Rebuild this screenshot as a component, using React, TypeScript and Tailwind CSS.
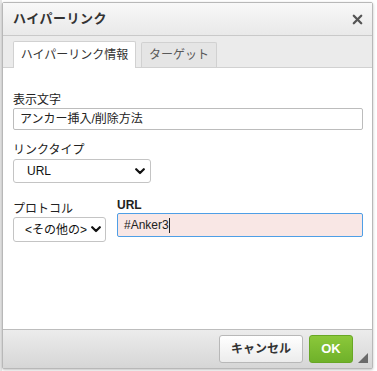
import React from "react";

const jp = { fontFamily: '"Liberation Sans", "Noto Sans CJK JP", sans-serif' };

function Chevron() {
  return (
    <svg width="10" height="7" viewBox="0 0 10 7" className="shrink-0">
      <path d="M1.2 1.2 L5 5 L8.8 1.2" fill="none" stroke="#111" strokeWidth="2.2" strokeLinecap="round" strokeLinejoin="round" />
    </svg>
  );
}

export default function App() {
  return (
    <div className="w-[377px] h-[371px] bg-white relative overflow-hidden" style={jp}>
      <div className="absolute left-0 top-0 w-[2px] h-full bg-[#e6e6e6]" />
      <div className="absolute left-[2px] top-[2px] w-[371px] h-[367px] border border-[#b8b8b8] rounded-[2px] flex flex-col bg-white shadow-[0_1px_3px_rgba(0,0,0,0.25)]">
        {/* title bar */}
        <div className="h-[33px] shrink-0 flex items-center justify-between pl-[10px] pr-[9px] bg-gradient-to-b from-[#f8f8f8] to-[#e9e9e9] border-b border-[#c9c9c9]">
          <span className="text-[13px] font-bold text-[#333] tracking-[0.5px]">ハイパーリンク</span>
          <svg width="11" height="11" viewBox="0 0 11 11">
            <path d="M1.8 1.8 L9.2 9.2 M9.2 1.8 L1.8 9.2" stroke="#555" strokeWidth="2.3" strokeLinecap="round" />
          </svg>
        </div>
        {/* tabs */}
        <div className="h-[32px] shrink-0 bg-[#ebebeb] flex items-end pl-[10px] gap-[5px] border-b border-[#d1d1d1]">
          <div className="h-[27px] w-[123px] flex items-center justify-center bg-white border border-[#d1d1d1] border-b-0 rounded-t-[2px] text-[12px] text-[#333] -mb-px">
            ハイパーリンク情報
          </div>
          <div className="h-[25px] w-[76px] flex items-center justify-center bg-[#e5e5e5] border border-[#d1d1d1] border-b-0 rounded-t-[2px] text-[12px] text-[#595959]">
            ターゲット
          </div>
        </div>
        {/* content */}
        <div className="flex-1 bg-white px-[10px] pt-[24px] flex flex-col">
          <div className="text-[12px] text-[#222] leading-[16px]">表示文字</div>
          <div className="h-[22px] w-[350px] border border-[#bcbcbc] rounded-[2px] flex items-center px-[6px] text-[12px] text-[#222]">
            アンカー挿入/削除方法
          </div>
          <div className="mt-[12px] text-[12px] text-[#222] leading-[16px]">リンクタイプ</div>
          <div className="mt-[1px] h-[24px] w-[138px] border border-[#c4c4c4] rounded-[3px] flex items-center justify-between pl-[13px] pr-[5px] text-[12px] text-[#111]">
            <span>URL</span>
            <Chevron />
          </div>
          <div className="mt-[14px] flex gap-[11px]">
            <div className="flex flex-col pt-[4px]">
              <div className="text-[12px] text-[#222] leading-[16px]">プロトコル</div>
              <div className="h-[25px] w-[93px] border border-[#c4c4c4] rounded-[3px] flex items-center justify-between pl-[11px] pr-[4px] text-[12px] text-[#111]">
                <span>&lt;その他の&gt;</span>
                <Chevron />
              </div>
            </div>
            <div className="flex flex-col">
              <div className="text-[12px] font-bold text-[#222] leading-[16px]">URL</div>
              <div className="h-[24px] w-[246px] border border-[#4f9fe6] rounded-[2px] bg-[#f9e7e5] flex items-center px-[6px] text-[12px] text-[#222]">
                <span>#Anker3</span>
                <span className="w-px h-[15px] bg-[#222]" />
              </div>
            </div>
          </div>
        </div>
        {/* footer */}
        <div className="h-[39px] shrink-0 border-t border-[#bdbdbd] bg-gradient-to-b from-[#ececec] to-[#d6d6d6] flex items-center justify-end pr-[19px] gap-[6px] relative">
          <div className="h-[28px] w-[84px] flex items-center justify-center border border-[#b8b8b8] rounded-[3px] bg-gradient-to-b from-white to-[#ececec] text-[12px] font-bold text-[#333]">
            キャンセル
          </div>
          <div className="h-[28px] w-[44px] flex items-center justify-center border border-[#68a725] rounded-[3px] bg-gradient-to-b from-[#8bc83a] to-[#6fb12a] text-[13px] font-bold text-white">
            OK
          </div>
          <svg width="10" height="10" viewBox="0 0 10 10" className="absolute right-[4px] bottom-[5px]">
            <path d="M10 0 L10 10 L0 10 Z" fill="#6a6a6a" />
          </svg>
        </div>
      </div>
    </div>
  );
}
